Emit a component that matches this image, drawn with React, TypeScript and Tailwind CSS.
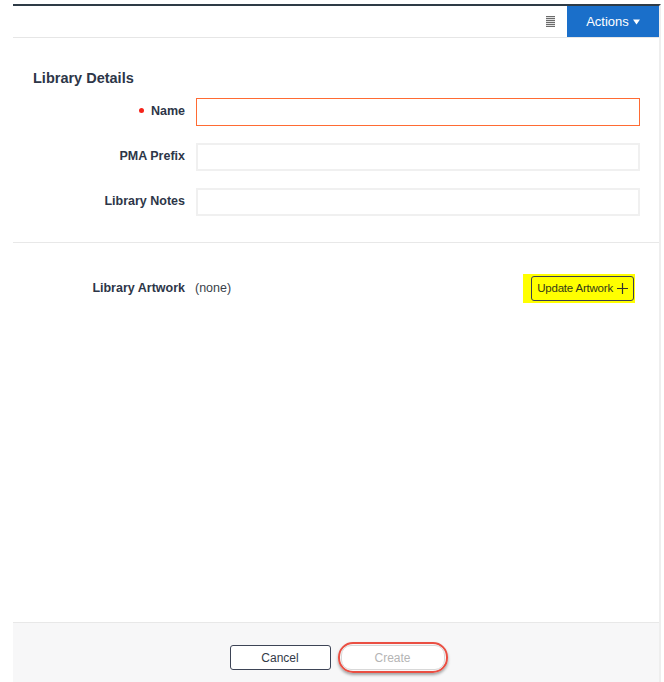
import React from 'react';

const labelCls = 'w-[172px] shrink-0 text-right text-[12.5px] font-bold text-[#2d3648]';

const Field: React.FC<{ label: string; required?: boolean; focused?: boolean }> = ({ label, required, focused }) => (
  <div className="flex items-center">
    <div className={labelCls}>
      {required && <span className="mr-[7px] inline-block h-[5px] w-[5px] translate-y-[-2px] rounded-full bg-[#f5231a]" />}
      {label}
    </div>
    <input
      className={`ml-[11px] h-[28px] w-[444px] bg-white outline-none ${
        focused ? 'border-[1.5px] border-[#ff6b33]' : 'border-2 border-[#f0f0f0]'
      }`}
    />
  </div>
);

export default function App() {
  return (
    <div
      className="flex h-[682px] w-[664px] bg-white"
      style={{ fontFamily: '"Liberation Sans", Arial, sans-serif' }}
    >
      <div className="w-[13px] shrink-0" />
      <div className="mt-[4px] flex w-[648px] flex-col border-r-2 border-t-2 border-r-[#eeeeee] border-t-[#2e3b46]">
        {/* toolbar */}
        <div className="flex h-[32px] items-stretch justify-end border-b border-[#e6e6e6]">
          <div className="mr-[12px] flex items-center">
            <svg width="9" height="11" viewBox="0 0 9 11">
              {[0, 2, 4, 6, 8, 10].map(y => (
                <rect key={y} x="0" y={y} width="9" height="1.2" fill="#6b6b6b" />
              ))}
            </svg>
          </div>
          <button className="flex w-[92px] items-center justify-center gap-[4px] bg-[#1a6fca] text-[13px] text-white">
            Actions
            <svg width="7" height="6" viewBox="0 0 7 6">
              <path d="M0 0.5h7L3.5 5.5z" fill="#fff" />
            </svg>
          </button>
        </div>

        {/* details */}
        <div className="px-[20px] pt-[30px]">
          <h2 className="text-[14.5px] font-bold text-[#2d3648]">Library Details</h2>
        </div>
        <div className="mt-[8px] flex flex-col gap-[17px]">
          <Field label="Name" required focused />
          <Field label="PMA Prefix" />
          <Field label="Library Notes" />
        </div>

        <div className="mt-[26px] border-b border-[#e8e8e8]" />

        {/* artwork */}
        <div className="mt-[31px] flex items-center pr-[24px]">
          <div className={labelCls}>Library Artwork</div>
          <span className="ml-[10px] text-[12.5px] text-[#3a3f4a]">(none)</span>
          <div className="ml-auto bg-[#ffff00] py-[2px] pl-[8px] pr-[1px]">
            <button className="flex h-[25px] items-center gap-[4px] rounded-[3px] border border-[#3b4050] px-[5px] text-[11.5px] tracking-[-0.2px] text-[#333a1a]">
              Update Artwork
              <svg width="11" height="11" viewBox="0 0 11 11">
                <path d="M5.5 0v11M0 5.5h11" stroke="#333" strokeWidth="1.2" />
              </svg>
            </button>
          </div>
        </div>

        <div className="flex-1" />

        {/* footer */}
        <div className="flex h-[60px] items-center justify-center gap-[7px] border-t border-[#e8e8e8] bg-[#f7f7f8] pl-[5px] pt-[10px]">
          <button className="h-[25px] w-[101px] rounded-[3px] border border-[#3d4456] bg-white text-[12px] text-[#333a48]">
            Cancel
          </button>
          <div className="rounded-[15px] border-[2.5px] border-[#ea4f43] p-[1px] shadow-[0_2px_3px_rgba(0,0,0,0.35)]">
            <button className="h-[25px] w-[104px] rounded-[10px] border border-[#d8d8d8] bg-white text-[12px] text-[#b5b5b5]">
              Create
            </button>
          </div>
        </div>
      </div>
    </div>
  );
}
